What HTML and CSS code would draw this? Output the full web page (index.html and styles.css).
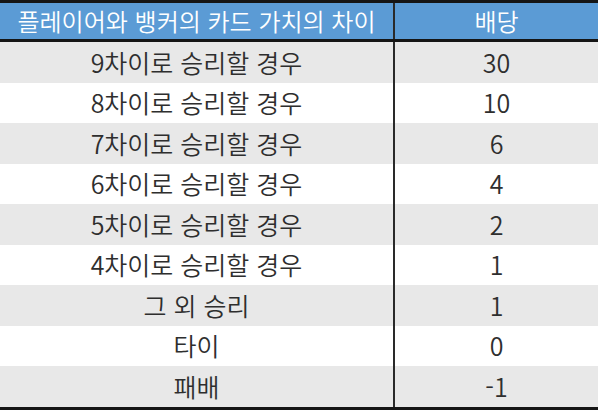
FILE: index.html
```html
<!DOCTYPE html>
<html lang="ko">
<head>
<meta charset="utf-8">
<link rel="stylesheet" href="styles.css">
</head>
<body>
<table class="payout">
  <thead>
    <tr><th class="c1">플레이어와 뱅커의 카드 가치의 차이</th><th class="c2">배당</th></tr>
  </thead>
  <tbody>
    <tr class="alt"><td class="c1">9차이로 승리할 경우</td><td class="c2">30</td></tr>
    <tr><td class="c1">8차이로 승리할 경우</td><td class="c2">10</td></tr>
    <tr class="alt"><td class="c1">7차이로 승리할 경우</td><td class="c2">6</td></tr>
    <tr><td class="c1">6차이로 승리할 경우</td><td class="c2">4</td></tr>
    <tr class="alt"><td class="c1">5차이로 승리할 경우</td><td class="c2">2</td></tr>
    <tr><td class="c1">4차이로 승리할 경우</td><td class="c2">1</td></tr>
    <tr class="alt"><td class="c1">그 외 승리</td><td class="c2">1</td></tr>
    <tr><td class="c1">타이</td><td class="c2">0</td></tr>
    <tr class="alt"><td class="c1">패배</td><td class="c2">-1</td></tr>
  </tbody>
</table>
</body>
</html>
```
FILE: styles.css
```css
html, body {
  margin: 0;
  padding: 0;
  background: #ffffff;
}
body {
  font-family: "Noto Sans CJK KR", "Noto Sans", sans-serif;
  width: 602px;
  height: 411px;
  overflow: hidden;
}
.payout {
  width: 598px;
  border-collapse: collapse;
  table-layout: fixed;
  border-top: 3px solid #151515;
  border-bottom: 3px solid #151515;
}
.payout th,
.payout td {
  padding: 0;
  text-align: center;
  line-height: 1;
  font-weight: 350;
}
.payout th {
  background: #5b9bd5;
  color: #ffffff;
  font-size: 24px;
  height: 36px;
  border-bottom: 3px solid #151515;
}
.payout td {
  color: #2e2e2e;
  font-size: 25px;
  height: 40.5px;
}
.payout .c1 {
  width: 393px;
  border-right: 2px solid #2a2a2a;
}
.payout tr.alt td {
  background: #e8e8e8;
}
```
